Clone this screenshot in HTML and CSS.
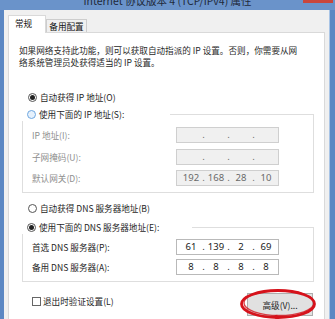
FILE: index.html
```html
<!DOCTYPE html>
<html>
<head>
<meta charset="utf-8">
<link rel="stylesheet" href="styles.css">
</head>
<body>
<div class="window">
  <div class="titlebar">
    <span class="title">Internet 协议版本 4 (TCP/IPv4) 属性</span>
    <span class="close"></span>
  </div>
  <div class="client">
    <div class="tabs">
      <div class="tab active">常规</div>
      <div class="tab">备用配置</div>
    </div>
    <div class="panel">
      <p class="desc">如果网络支持此功能，则可以获取自动指派的 IP 设置。否则，你需要从网<br>络系统管理员处获得适当的 IP 设置。</p>
      <div class="option opt-first"><span class="radio checked"></span>自动获得 IP 地址(O)</div>
      <fieldset class="group group-ip">
        <legend class="option"><span class="radio focus"></span>使用下面的 IP 地址(S):</legend>
        <div class="row disabled"><span class="label">IP 地址(I):</span>
          <div class="ip"><span></span><i>.</i><span></span><i>.</i><span></span><i>.</i><span></span></div></div>
        <div class="row disabled"><span class="label">子网掩码(U):</span>
          <div class="ip"><span></span><i>.</i><span></span><i>.</i><span></span><i>.</i><span></span></div></div>
        <div class="row disabled"><span class="label">默认网关(D):</span>
          <div class="ip"><span>192</span><i>.</i><span>168</span><i>.</i><span>28</span><i>.</i><span>10</span></div></div>
      </fieldset>
      <div class="option opt-dns"><span class="radio"></span>自动获得 DNS 服务器地址(B)</div>
      <fieldset class="group group-dns">
        <legend class="option"><span class="radio checked"></span>使用下面的 DNS 服务器地址(E):</legend>
        <div class="row"><span class="label">首选 DNS 服务器(P):</span>
          <div class="ip"><span>61</span><i>.</i><span>139</span><i>.</i><span>2</span><i>.</i><span>69</span></div></div>
        <div class="row"><span class="label">备用 DNS 服务器(A):</span>
          <div class="ip"><span>8</span><i>.</i><span>8</span><i>.</i><span>8</span><i>.</i><span>8</span></div></div>
      </fieldset>
      <div class="footer">
        <label class="check"><span class="box"></span>退出时验证设置(L)</label>
        <div class="btn-wrap">
          <button class="btn">高级(V)...</button>
          <svg class="ring" width="80" height="34" viewBox="0 0 80 34">
            <ellipse cx="39" cy="17" rx="36.5" ry="13.5" fill="none" stroke="#d6131c" stroke-width="2.8"/>
            <ellipse cx="40" cy="16" rx="35" ry="12.5" fill="none" stroke="#d6131c" stroke-width="1.4" opacity="0.8"/>
            <path d="M37 28 L38 34" stroke="#d6131c" stroke-width="2.5"/>
          </svg>
        </div>
      </div>
    </div>
  </div>
</div>
</body>
</html>
```
FILE: styles.css
```css
* { box-sizing: border-box; }
html, body {
  margin: 0;
  padding: 0;
  width: 335px;
  height: 319px;
  overflow: hidden;
  background: #5b87c3;
  font-family: "Noto Sans CJK SC", "Noto Sans", sans-serif;
  color: #1e1e1e;
}
.window {
  display: flex;
  flex-direction: column;
  width: 335px;
  height: 319px;
}
.titlebar {
  position: relative;
  height: 10px;
  background: #6a93ca;
  display: flex;
  justify-content: center;
  overflow: hidden;
}
.title {
  font-size: 10.5px;
  line-height: 12px;
  margin-top: -5px;
  color: #1f2a3a;
  white-space: nowrap;
}
.close {
  position: absolute;
  right: 2px;
  top: 0;
  width: 30px;
  height: 3px;
  background: #c9463c;
}
.client {
  flex: 1;
  margin: 0 5px 0 4px;
  background: #f0f0f0;
  padding: 5px 4px 0 4px;
  display: flex;
  flex-direction: column;
  border-right: 1px solid #a8c4e6;
}
.tabs {
  display: flex;
  align-items: flex-end;
  height: 17px;
  position: relative;
  z-index: 1;
}
.tab {
  font-size: 8.6px;
  line-height: 12px;
  height: 13px;
  padding: 0;
  background: #f0f0f0;
  border: 1px solid #cdcdcd;
  border-bottom: none;
  width: 41px;
  text-align: center;
  color: #111;
  white-space: nowrap;
}
.tab.active {
  width: 38px;
  height: 18px;
  margin-bottom: -1px;
  background: #fff;
  border-color: #d9d9d9;
  line-height: 15px;
  text-align: left;
  padding-left: 6px;
}
.panel {
  flex: 1;
  background: #fff;
  border: 1px solid #d9d9d9;
  border-bottom: none;
  padding: 11px 8px 0 13px;
}
.desc {
  margin: 0 0 0 -3px;
  font-size: 8.6px;
  line-height: 12px;
  color: #2a2a2a;
  white-space: nowrap;
}
.option {
  display: flex;
  align-items: center;
  height: 14px;
  font-size: 8.6px;
  color: #1e1e1e;
  white-space: nowrap;
  padding-left: 6px;
}
.opt-first { margin-top: 22px; }
.opt-dns { margin-top: 8px; }
.radio {
  width: 9px;
  height: 9px;
  border-radius: 50%;
  border: 1px solid #555;
  background: #fff;
  margin-right: 3px;
  display: flex;
  align-items: center;
  justify-content: center;
  flex: none;
}
.radio.checked::after {
  content: "";
  width: 5px;
  height: 5px;
  border-radius: 50%;
  background: #222;
}
.radio.focus {
  border-color: #6fa7e0;
  background: #e6f1fc;
}
.group {
  margin: 3px 2px 0 0;
  border: 1px solid #dedede;
  padding: 6px 0 6px 9px;
  min-inline-size: 0;
}
.group legend {
  margin-left: -10px;
  padding: 0 0 0 5px;
  width: 148px;
  background: #fff;
}
.group-dns { margin-top: 5px; padding-top: 5px; }
.group-dns legend { width: 170px; }
.row {
  display: flex;
  align-items: center;
  height: 16px;
  margin-bottom: 5.5px;
  font-size: 8.6px;
}
.group-dns .row { margin-bottom: 4px; }
.row:last-child { margin-bottom: 0; }
.label {
  width: 144px;
  flex: none;
  color: #1e1e1e;
  white-space: nowrap;
}
.row.disabled .label { color: #8e8e8e; }
.ip {
  width: 103px;
  height: 16px;
  border: 1px solid #b9b9b9;
  background: #fff;
  display: flex;
  align-items: center;
  padding-left: 4px;
  font-size: 9.5px;
  color: #222;
  font-family: "Noto Sans", "Noto Sans CJK SC", sans-serif;
}
.row.disabled .ip {
  background: #f0f0f0;
  border-color: #cfcfcf;
  color: #6a6a6a;
}
.ip span {
  width: 20px;
  text-align: center;
  line-height: 14px;
}
.ip i {
  font-style: normal;
  width: 5px;
  text-align: center;
  line-height: 14px;
}
.footer {
  display: flex;
  justify-content: space-between;
  align-items: flex-start;
  margin-top: 11px;
}
.check {
  display: flex;
  align-items: center;
  font-size: 8.6px;
  margin-top: 1px;
  margin-left: 10px;
  height: 14px;
  color: #1e1e1e;
}
.box {
  width: 9px;
  height: 9px;
  border: 1px solid #666;
  background: #fff;
  margin-right: 2px;
}
.btn-wrap {
  position: relative;
  margin-right: 3px;
}
.btn {
  display: block;
  width: 66px;
  height: 23px;
  font-family: inherit;
  font-size: 8.6px;
  background: #e1e1e1;
  border: 1px solid #adadad;
  color: #1e1e1e;
  padding: 0;
}
.ring {
  position: absolute;
  left: -8px;
  top: -6px;
}
```
